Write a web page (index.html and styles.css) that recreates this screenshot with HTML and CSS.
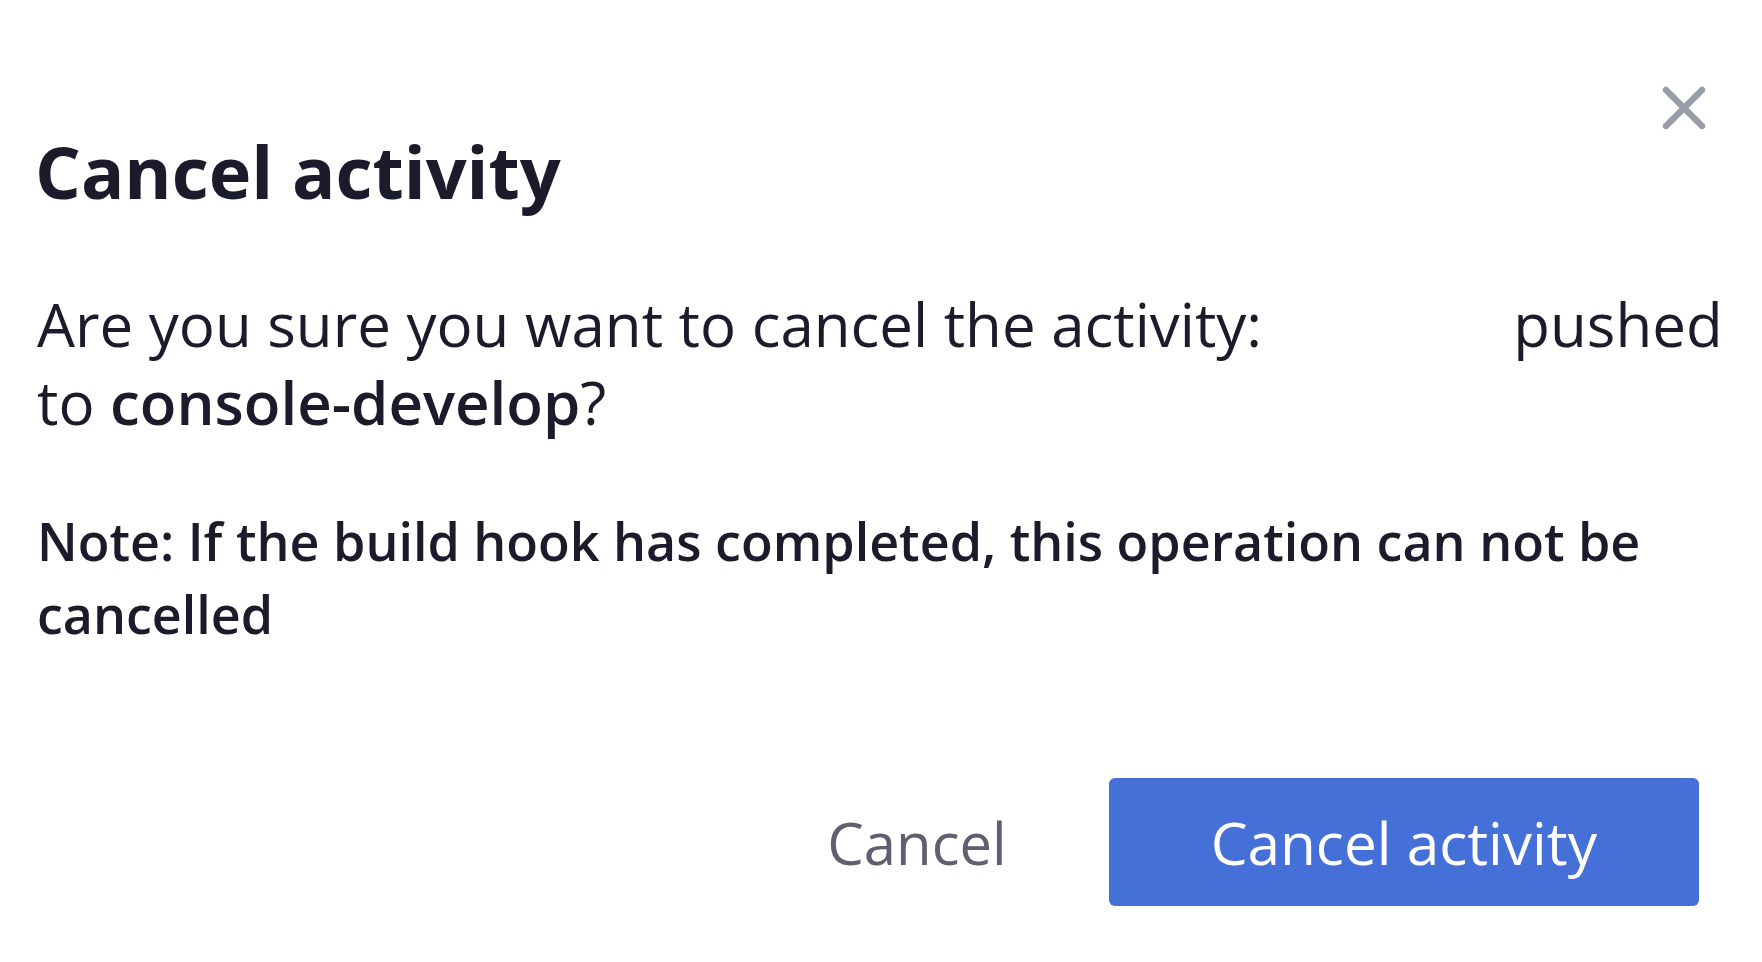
FILE: index.html
```html
<!DOCTYPE html>
<html lang="en">
<head>
<meta charset="utf-8">
<title>Cancel activity</title>
<link rel="stylesheet" href="styles.css">
</head>
<body>
<div class="dialog" role="dialog" aria-labelledby="dlg-title">
  <button class="close" aria-label="Close">
    <svg viewBox="0 0 46 46" width="46" height="46" aria-hidden="true">
      <path d="M5 5 L41 41 M41 5 L5 41" stroke="#979ca8" stroke-width="6.5" stroke-linecap="round" fill="none"/>
    </svg>
  </button>
  <h1 class="title" id="dlg-title">Cancel activity</h1>
  <p class="message">Are you sure you want to cancel the activity: <span class="hash"></span> pushed to <strong>console-develop</strong>?</p>
  <p class="note">Note: If the build hook has completed, this operation can not be cancelled</p>
  <div class="actions">
    <button class="btn-link">Cancel</button>
    <button class="btn-primary">Cancel activity</button>
  </div>
</div>
</body>
</html>
```

FILE: styles.css
```css
html, body {
  margin: 0;
  padding: 0;
  background: #ffffff;
}

body {
  font-family: "Open Sans", "Noto Sans", "Liberation Sans", sans-serif;
  color: #1c1b2b;
}

.dialog {
  position: relative;
  padding: 128px 37px 0 37px;
}

.close {
  position: absolute;
  top: 85px;
  right: 55px;
  width: 46px;
  height: 46px;
  padding: 0;
  border: 0;
  background: transparent;
  display: flex;
}

.title {
  margin: 0 0 0 -2px;
  font-size: 72px;
  line-height: 86px;
  font-weight: 700;
  color: #1c1b2b;
}

.message {
  margin: 71px 0 0 0;
  font-size: 60px;
  line-height: 78px;
  font-weight: 400;
  color: #1c1b2b;
}

.message strong {
  font-weight: 600;
}

.hash {
  display: inline-block;
  width: 220px;
  height: 1px;
}

.note {
  margin: 63px 0 0 0;
  font-size: 52px;
  line-height: 73px;
  font-weight: 600;
  color: #1c1b2b;
}

.actions {
  margin: 128px 26px 0 0;
  display: flex;
  justify-content: flex-end;
  align-items: center;
  gap: 102px;
}

.btn-link {
  font-family: inherit;
  font-size: 58px;
  font-weight: 400;
  color: #5f5e72;
  background: transparent;
  border: 0;
  padding: 0;
}

.btn-primary {
  font-family: inherit;
  font-size: 58.5px;
  font-weight: 400;
  color: #ffffff;
  background: #4570d8;
  border: 0;
  border-radius: 6px;
  height: 128px;
  padding: 0 102px;
}
```
